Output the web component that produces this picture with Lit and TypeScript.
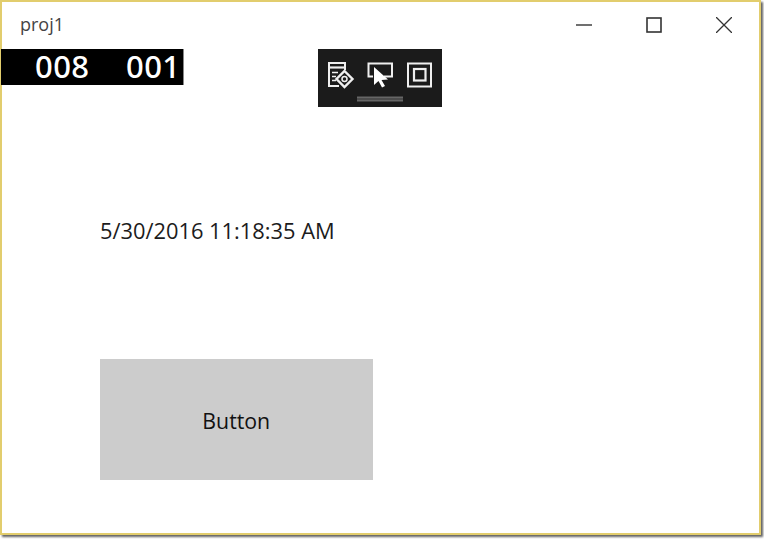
import { LitElement, html, css } from "lit";
import { customElement } from "lit/decorators.js";

@customElement("app-root")
export class AppRoot extends LitElement {
  static styles = css`
    :host { display: block; width: 764px; height: 539px; background: #fff; overflow: hidden; font-family: "Open Sans", "Noto Sans", sans-serif; }
    .window { box-sizing: border-box; width: 761px; height: 535px; border: 2px solid #e2cd6d; background: #fff; position: relative; box-shadow: 2px 2px 2px rgba(60,60,60,.8); display: flex; flex-direction: column; }
    .titlebar { height: 46px; display: flex; align-items: center; flex: none; }
    .title { font-size: 18px; color: #444; margin-left: 18px; margin-top: -3px; flex: 1; }
    .ctl { width: 70px; height: 46px; display: flex; align-items: center; justify-content: center; margin-top: -1px; }
    .ctl svg { display: block; }
    .ctls { display: flex; }
    .counters { position: absolute; left: -1px; top: 47px; width: 183px; height: 36px; background: #000; border-right: 1px solid #888; box-sizing: border-box; color: #fff; font-family: "Noto Sans", "Open Sans", sans-serif; font-size: 31px; font-weight: 500; line-height: 35px; letter-spacing: 0.4px; }
    .counters span { position: absolute; top: 0; }
    .c1 { left: 34px; } .c2 { left: 125px; }
    .tools { position: absolute; left: 316px; top: 47px; width: 124px; height: 58px; background: #1b1b1b; }
    .tools svg { position: absolute; left: 0; top: 0; }
    .content { flex: 1; padding: 156px 0 0 98px; display: flex; flex-direction: column; }
    .time { font-size: 21.85px; color: #1c1c1c; line-height: 54px; height: 54px; }
    .btn { margin-top: 101px; width: 272.5px; height: 121px; background: #ccc; border: 0; padding: 2px 0 0; color: #111; font: inherit; font-size: 21.3px; display: flex; align-items: center; justify-content: center; }
  `;
  render() {
    return html`<div class="window">
      <div class="titlebar">
        <div class="title">proj1</div>
        <div class="ctls">
          <div class="ctl"><svg width="16" height="16" viewBox="0 0 16 16"><path d="M0 8H16" stroke="#333" stroke-width="1.4"/></svg></div>
          <div class="ctl"><svg width="16" height="16" viewBox="0 0 16 16"><rect x="1" y="1" width="14" height="14" fill="none" stroke="#333" stroke-width="1.6"/></svg></div>
          <div class="ctl"><svg width="16" height="16" viewBox="0 0 16 16"><path d="M0 0L16 16M16 0L0 16" stroke="#333" stroke-width="1.3"/></svg></div>
        </div>
      </div>
      <div class="counters"><span class="c1">008</span><span class="c2">001</span></div>
      <div class="tools">
        <svg width="124" height="58" viewBox="0 0 124 58" fill="none" stroke="#efefef" stroke-width="2">
          <path d="M27 21V14H11V37H21"/>
          <path d="M11 18.500H27" stroke-width="2.200"/>
          <path d="M14 23.500H20M14 27.500H18M14 31.500H18" stroke-width="1.700"/>
          <path d="M26.500 22L34.500 30L26.500 38L18.500 30Z" stroke-width="2.400"/>
          <circle cx="26.500" cy="30" r="2.500" fill="#1b1b1b" stroke-width="1.500"/>
          <path d="M55 27.500H50.500V14.500H74V27.500H66"/>
          <path d="M56 18L56 36L60.500 32L64 38.500L67 37L63.500 31L70 30.500Z" fill="#fff" stroke="none"/>
          <rect x="90" y="14.500" width="23" height="23"/>
          <rect x="96" y="20" width="11.500" height="11.500" stroke-width="2.200"/>
          <rect x="39" y="47.500" width="46" height="5" fill="#666" stroke="none"/>
          <path d="M39 50H85" stroke="#333" stroke-width="1"/>
        </svg>
      </div>
      <div class="content">
        <div class="time">5/30/2016 11:18:35 AM</div>
        <button class="btn">Button</button>
      </div>
    </div>`;
  }
}
